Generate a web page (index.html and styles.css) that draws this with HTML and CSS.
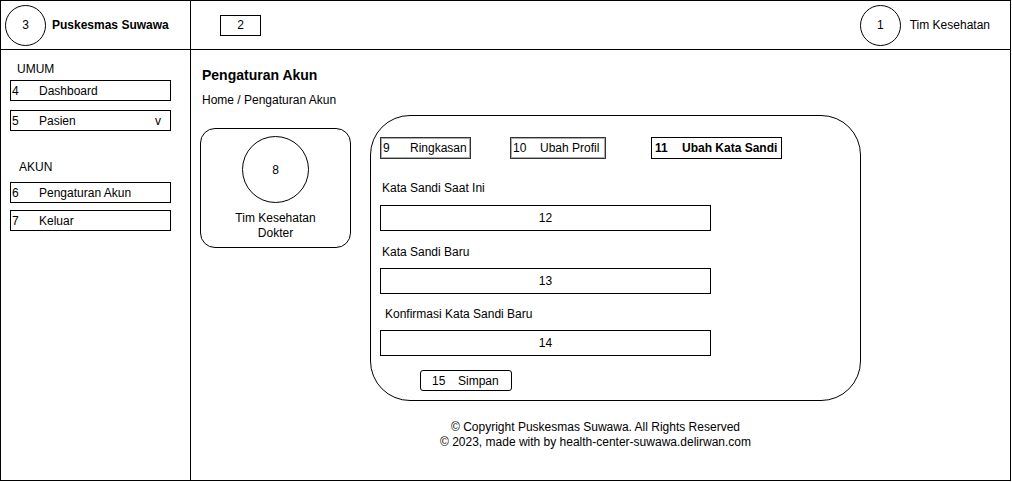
FILE: index.html
```html
<!DOCTYPE html>
<html lang="id">
<head>
  <meta charset="UTF-8">
  <meta name="viewport" content="width=device-width, initial-scale=1.0">
  <title>Pengaturan Akun - Puskesmas Suwawa</title>
  <link rel="stylesheet" href="styles.css">
</head>
<body>
  <div class="app">
    <!-- Brand -->
    <div class="brand">
      <div class="circle circle-sm">3</div>
      <span class="brand-name">Puskesmas Suwawa</span>
    </div>

    <!-- Topbar -->
    <div class="topbar">
      <div class="toggle">2</div>
      <div class="user">
        <div class="circle circle-sm">1</div>
        <span>Tim Kesehatan</span>
      </div>
    </div>

    <!-- Sidebar -->
    <aside class="sidebar">
      <div class="nav-heading">UMUM</div>
      <div class="nav-item"><span class="num">4</span>Dashboard</div>
      <div class="nav-item nav-item-gap"><span class="num">5</span>Pasien<span class="caret">v</span></div>
      <div class="nav-heading nav-heading-akun">AKUN</div>
      <div class="nav-item"><span class="num">6</span>Pengaturan Akun</div>
      <div class="nav-item nav-item-tight"><span class="num">7</span>Keluar</div>
    </aside>

    <!-- Main -->
    <main class="main">
      <h1 class="page-title">Pengaturan Akun</h1>
      <div class="breadcrumb">Home / Pengaturan Akun</div>

      <div class="cards">
        <div class="profile-card">
          <div class="circle circle-lg">8</div>
          <div class="profile-name">Tim Kesehatan<br>Dokter</div>
        </div>

        <div class="form-card">
          <div class="tabs">
            <div class="tab tab-ringkasan"><span class="num">9</span>Ringkasan</div>
            <div class="tab tab-profil"><span class="num">10</span>Ubah Profil</div>
            <div class="tab tab-active"><span class="num">11</span>Ubah Kata Sandi</div>
          </div>

          <div class="field-label field-label-first">Kata Sandi Saat Ini</div>
          <div class="field-input">12</div>

          <div class="field-label">Kata Sandi Baru</div>
          <div class="field-input field-input-tight">13</div>

          <div class="field-label field-label-indent">Konfirmasi Kata Sandi Baru</div>
          <div class="field-input field-input-tight">14</div>

          <button class="save-button"><span class="num">15</span>Simpan</button>
        </div>
      </div>

      <footer class="footer">
        <p>© Copyright Puskesmas Suwawa. All Rights Reserved</p>
        <p>© 2023, made with by health-center-suwawa.delirwan.com</p>
      </footer>
    </main>
  </div>
</body>
</html>
```

FILE: styles.css
```css
/* Reset */
* {
  box-sizing: border-box;
  margin: 0;
  padding: 0;
}

body {
  font-family: 'Liberation Sans', Arial, sans-serif;
  font-size: 12px;
  color: #000;
  background-color: #fff;
}

.app {
  width: 1011px;
  height: 481px;
  border: 1px solid #000;
  display: grid;
  grid-template-columns: 190px 1fr;
  grid-template-rows: 49px 1fr;
}

.circle {
  border: 1px solid #000;
  border-radius: 50%;
  display: flex;
  align-items: center;
  justify-content: center;
  flex-shrink: 0;
}

.circle-sm {
  width: 41px;
  height: 41px;
}

.circle-lg {
  width: 67px;
  height: 67px;
  margin: 0 auto;
}

.num {
  display: inline-block;
}

/* Header */
.brand {
  border-right: 1px solid #000;
  border-bottom: 1px solid #000;
  display: flex;
  align-items: center;
  padding-left: 4px;
  gap: 6px;
}

.brand-name {
  font-weight: bold;
}

.topbar {
  border-bottom: 1px solid #000;
  display: flex;
  align-items: center;
  justify-content: space-between;
  padding: 0 20px 0 29px;
}

.toggle {
  width: 41px;
  height: 21px;
  border: 1px solid #000;
  display: flex;
  align-items: center;
  justify-content: center;
}

.user {
  display: flex;
  align-items: center;
  gap: 9px;
}

/* Sidebar */
.sidebar {
  border-right: 1px solid #000;
  padding: 12px 0 0 9px;
}

.nav-heading {
  line-height: 14px;
  padding-left: 7px;
  margin-bottom: 4px;
}

.nav-heading-akun {
  padding-left: 9px;
  margin-top: 29px;
  margin-bottom: 8px;
}

.nav-item {
  width: 161px;
  height: 21px;
  border: 1px solid #000;
  display: flex;
  align-items: center;
  padding-left: 1px;
}

.nav-item .num {
  width: 27px;
}

.nav-item-gap {
  margin-top: 9px;
}

.nav-item-tight {
  margin-top: 7px;
}

.caret {
  margin-left: auto;
  margin-right: 9px;
}

/* Main */
.main {
  padding: 17px 19px 0 9px;
}

.page-title {
  font-size: 14px;
  font-weight: bold;
  line-height: 16px;
  padding-left: 2px;
}

.breadcrumb {
  line-height: 14px;
  margin-top: 10px;
  padding-left: 2px;
}

.cards {
  display: flex;
  align-items: flex-start;
  gap: 19px;
  margin-top: 8px;
}

.profile-card {
  width: 151px;
  height: 120px;
  margin-top: 13px;
  border: 1px solid #000;
  border-radius: 15px;
  padding-top: 7px;
  text-align: center;
}

.profile-name {
  line-height: 15px;
  margin-top: 8px;
}

.form-card {
  width: 491px;
  height: 286px;
  border: 1px solid #000;
  border-radius: 40px;
  padding: 21px 0 0 9px;
}

.tabs {
  display: flex;
  gap: 39px;
}

.tab {
  height: 22px;
  border: 1px solid #333;
  box-shadow: inset 0 0 0 1px #aaa;
  display: flex;
  align-items: center;
  padding-left: 2px;
}

.tab .num {
  width: 27px;
}

.tab-ringkasan {
  width: 91px;
}

.tab-profil {
  width: 96px;
}

.tab-active {
  width: 131px;
  margin-left: 6px;
  border: 1px solid #000;
  box-shadow: none;
  padding-left: 3px;
  font-weight: bold;
}

.field-label {
  line-height: 14px;
  margin-top: 14px;
  padding-left: 2px;
}

.field-label-first {
  margin-top: 22px;
}

.field-label-indent {
  padding-left: 5px;
  margin-top: 13px;
}

.field-input {
  width: 331px;
  height: 26px;
  margin-top: 10px;
  border: 1px solid #000;
  display: flex;
  align-items: center;
  justify-content: center;
}

.field-input-tight {
  margin-top: 9px;
}

.save-button {
  width: 92px;
  height: 21px;
  margin: 14px 0 0 40px;
  border: 1px solid #000;
  border-radius: 3px;
  background: #fff;
  font-family: inherit;
  font-size: 12px;
  color: #000;
  display: flex;
  align-items: center;
  padding-left: 11px;
}

.save-button .num {
  width: 26px;
  text-align: left;
}

.footer {
  margin-top: 19px;
  text-align: center;
  line-height: 15px;
}
```
